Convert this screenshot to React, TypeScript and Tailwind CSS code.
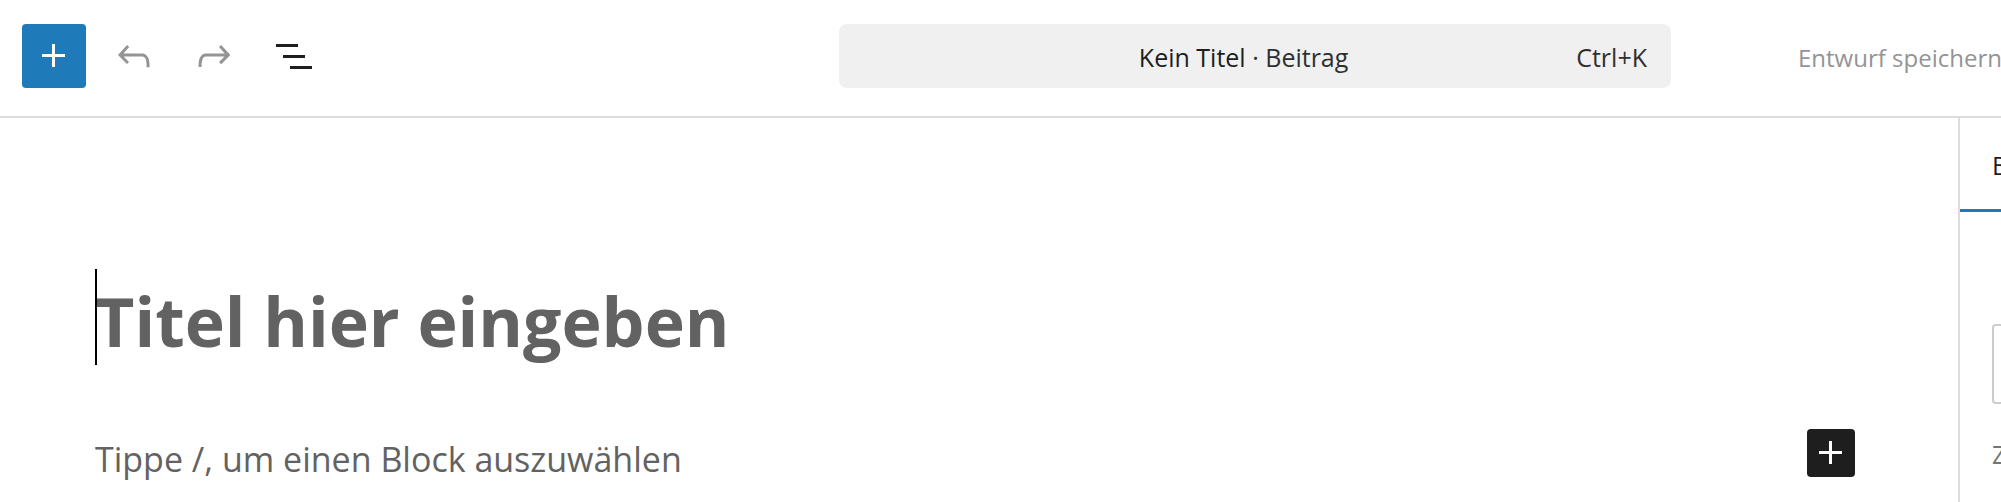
import React from "react";

type IconProps = { d: string };

function Icon({ d }: IconProps) {
  return (
    <svg viewBox="0 0 24 24" className="size-12 fill-current" aria-hidden="true">
      <path d={d} />
    </svg>
  );
}

const icons = {
  plus: "M11 12.5V17.5H12.5V12.5H17.5V11H12.5V6H11V11H6V12.5H11Z",
  undo: "M18.3 11.7c-.6-.6-1.4-.9-2.3-.9H6.7l2.9-3.3-1.1-1-4.5 5L8.5 16l1-1-2.7-2.7H16c.5 0 .9.2 1.3.5 1 1 1 3.4 1 4.5v.3h1.5v-.2c0-1.5 0-4.3-1.5-5.7z",
  redo: "M15.6 6.5l-1.1 1 2.9 3.3H8c-.9 0-1.7.3-2.3.9-1.4 1.5-1.4 4.2-1.4 5.6v.2h1.5v-.3c0-1.1 0-3.5 1-4.5.3-.3.7-.5 1.3-.5h9.2L14.5 15l1.1 1.1 4.6-4.6-4.6-5z",
  list: "M3 6h11v1.5H3V6Zm3.5 5.5h11V13h-11v-1.5ZM21 17H10v1.5h11V17Z",
};

const toolButton = "flex size-16 items-center justify-center rounded-sm";

function Header() {
  return (
    <header className="flex items-center border-b-2 border-[#dddddd] pt-6 pb-7 pl-[22px]">
      <div className="flex flex-1 gap-4">
        <button aria-label="+" className={`${toolButton} bg-[#1e7ab8] text-white`}>
          <Icon d={icons.plus} />
        </button>
        <button disabled className={`${toolButton} text-[#949494]`}>
          <Icon d={icons.undo} />
        </button>
        <button disabled className={`${toolButton} text-[#949494]`}>
          <Icon d={icons.redo} />
        </button>
        <button className={`${toolButton} text-[#1e1e1e]`}>
          <Icon d={icons.list} />
        </button>
      </div>
      <button className="flex h-16 w-[832px] items-center rounded-lg bg-[#f0f0f0] pt-1 pr-6 pl-[72px] text-[25px] text-[#2f2f2f]">
        <span className="flex-1 text-center">
          <span className="text-[#1e1e1e]">Kein Titel</span> · Beitrag
        </span>
        <span>Ctrl+K</span>
      </button>
      <div className="flex w-[330px] justify-end">
        <button disabled className="w-[203px] pt-1 text-left text-2xl whitespace-nowrap text-[#949494]">
          Entwurf speichern
        </button>
      </div>
    </header>
  );
}

function Canvas() {
  return (
    <main className="flex-1 pr-[103px] pl-[95px] text-[#626262]">
      <div className="relative mt-[151px] h-24">
        <h1 className="pt-2 text-[68px] leading-[88px] font-bold">Titel hier eingeben</h1>
        <span className="absolute inset-y-0 left-0 w-0.5 bg-black" />
      </div>
      <div className="mt-16 flex items-start justify-between">
        <p className="text-[34px] leading-[60px]">Tippe /, um einen Block auszuwählen</p>
        <button aria-label="+" className="rounded-sm bg-[#1e1e1e] text-white">
          <Icon d={icons.plus} />
        </button>
      </div>
    </main>
  );
}

function Sidebar() {
  return (
    <aside className="w-[43px] shrink-0 overflow-hidden border-l-2 border-[#dddddd]">
      <button className="block h-[94px] w-full border-b-3 border-[#1e7ab8] pt-1 pl-8 text-left text-[25px] text-[#1e1e1e]">
        B
      </button>
      <label className="flex flex-col pt-28 pl-8 text-[25px] text-[#757575]">
        <input type="text" className="order-first h-20 w-[500px] rounded-sm border-2 border-[#cccccc] bg-white px-4" />
        <span className="mt-8">Z</span>
      </label>
    </aside>
  );
}

export default function App() {
  return (
    <div className="flex min-h-screen flex-col overflow-hidden bg-white font-['Open_Sans','Noto_Sans',sans-serif]">
      <Header />
      <div className="flex flex-1">
        <Canvas />
        <Sidebar />
      </div>
    </div>
  );
}
